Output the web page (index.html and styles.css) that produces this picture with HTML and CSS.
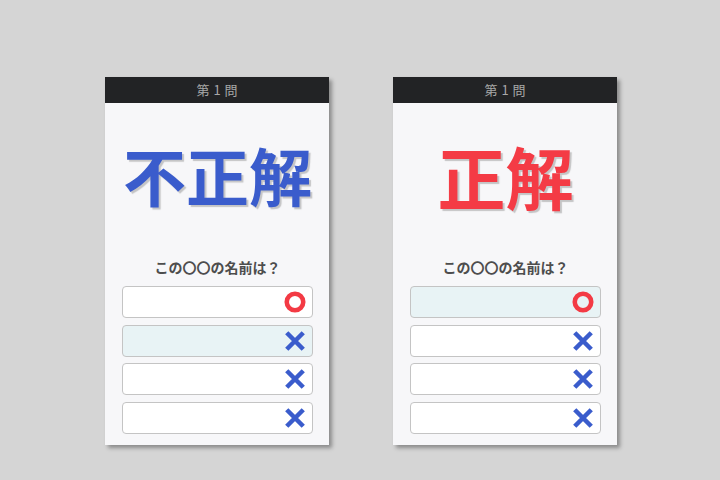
FILE: index.html
```html
<!DOCTYPE html>
<html lang="ja">
<head>
    <meta charset="UTF-8">
    <title>クイズ 結果</title>
    <link rel="stylesheet" href="styles.css">
</head>
<body>

    <div class="screens">
        <!-- 不正解 -->
        <div class="card">
            <div class="card-header">第 1 問</div>
            <div class="card-body">
                <div class="result result-wrong">不正解</div>
                <p class="question">この〇〇の名前は？</p>
                <ul class="choices">
                    <li class="choice">
                        <svg class="mark" viewBox="0 0 24 24"><circle cx="12" cy="12" r="9" fill="none" stroke="#f33a44" stroke-width="5"/></svg>
                    </li>
                    <li class="choice selected">
                        <svg class="mark" viewBox="0 0 24 24"><path d="M3 3L21 21M21 3L3 21" stroke="#3a5ccc" stroke-width="5"/></svg>
                    </li>
                    <li class="choice">
                        <svg class="mark" viewBox="0 0 24 24"><path d="M3 3L21 21M21 3L3 21" stroke="#3a5ccc" stroke-width="5"/></svg>
                    </li>
                    <li class="choice">
                        <svg class="mark" viewBox="0 0 24 24"><path d="M3 3L21 21M21 3L3 21" stroke="#3a5ccc" stroke-width="5"/></svg>
                    </li>
                </ul>
            </div>
        </div>

        <!-- 正解 -->
        <div class="card">
            <div class="card-header">第 1 問</div>
            <div class="card-body">
                <div class="result result-right">正解</div>
                <p class="question">この〇〇の名前は？</p>
                <ul class="choices">
                    <li class="choice selected">
                        <svg class="mark" viewBox="0 0 24 24"><circle cx="12" cy="12" r="9" fill="none" stroke="#f33a44" stroke-width="5"/></svg>
                    </li>
                    <li class="choice">
                        <svg class="mark" viewBox="0 0 24 24"><path d="M3 3L21 21M21 3L3 21" stroke="#3a5ccc" stroke-width="5"/></svg>
                    </li>
                    <li class="choice">
                        <svg class="mark" viewBox="0 0 24 24"><path d="M3 3L21 21M21 3L3 21" stroke="#3a5ccc" stroke-width="5"/></svg>
                    </li>
                    <li class="choice">
                        <svg class="mark" viewBox="0 0 24 24"><path d="M3 3L21 21M21 3L3 21" stroke="#3a5ccc" stroke-width="5"/></svg>
                    </li>
                </ul>
            </div>
        </div>
    </div>

</body>
</html>
```

FILE: styles.css
```css
/* 基本 */
* {
    margin: 0;
    padding: 0;
    box-sizing: border-box;
}

body {
    width: 720px;
    height: 480px;
    background-color: #d5d5d5;
    font-family: "Noto Sans CJK JP", "Noto Sans", sans-serif;
    color: #444;
    overflow: hidden;
}

.screens {
    display: flex;
    gap: 64px;
    padding: 77px 0 0 105px;
}

/* カード */
.card {
    width: 224px;
    height: 368px;
    background: #f7f7f9;
    box-shadow: 3px 3px 4px rgba(0, 0, 0, 0.35);
    display: flex;
    flex-direction: column;
}

.card-header {
    height: 26px;
    background: #222325;
    color: #a8a8a8;
    font-size: 13px;
    line-height: 26px;
    text-align: center;
    word-spacing: 1px;
}

.card-body {
    padding: 0 16px 0 17px;
}

/* 結果 */
.result {
    margin-top: 36px;
    height: 70px;
    font-size: 63px;
    font-weight: 700;
    line-height: 70px;
    text-align: center;
    text-shadow: 2px 2px 1px rgba(120, 120, 120, 0.4);
}

.result-wrong {
    color: #3a5ccc;
}

.result-right {
    color: #f43b45;
    font-size: 68px;
    line-height: 74px;
}

.question {
    margin-top: 48px;
    font-size: 14px;
    font-weight: 700;
    text-align: center;
    line-height: 20px;
    color: #4d4d4d;
}

/* 選択肢 */
.choices {
    list-style: none;
    margin-top: 9px;
    display: flex;
    flex-direction: column;
    gap: 6.5px;
}

.choice {
    height: 32px;
    background: #fff;
    border: 1px solid #c4c4c4;
    border-radius: 4px;
    display: flex;
    justify-content: flex-end;
    align-items: center;
    padding-right: 6px;
}

.choice.selected {
    background: #e8f3f5;
}

.mark {
    width: 22px;
    height: 22px;
}
```
